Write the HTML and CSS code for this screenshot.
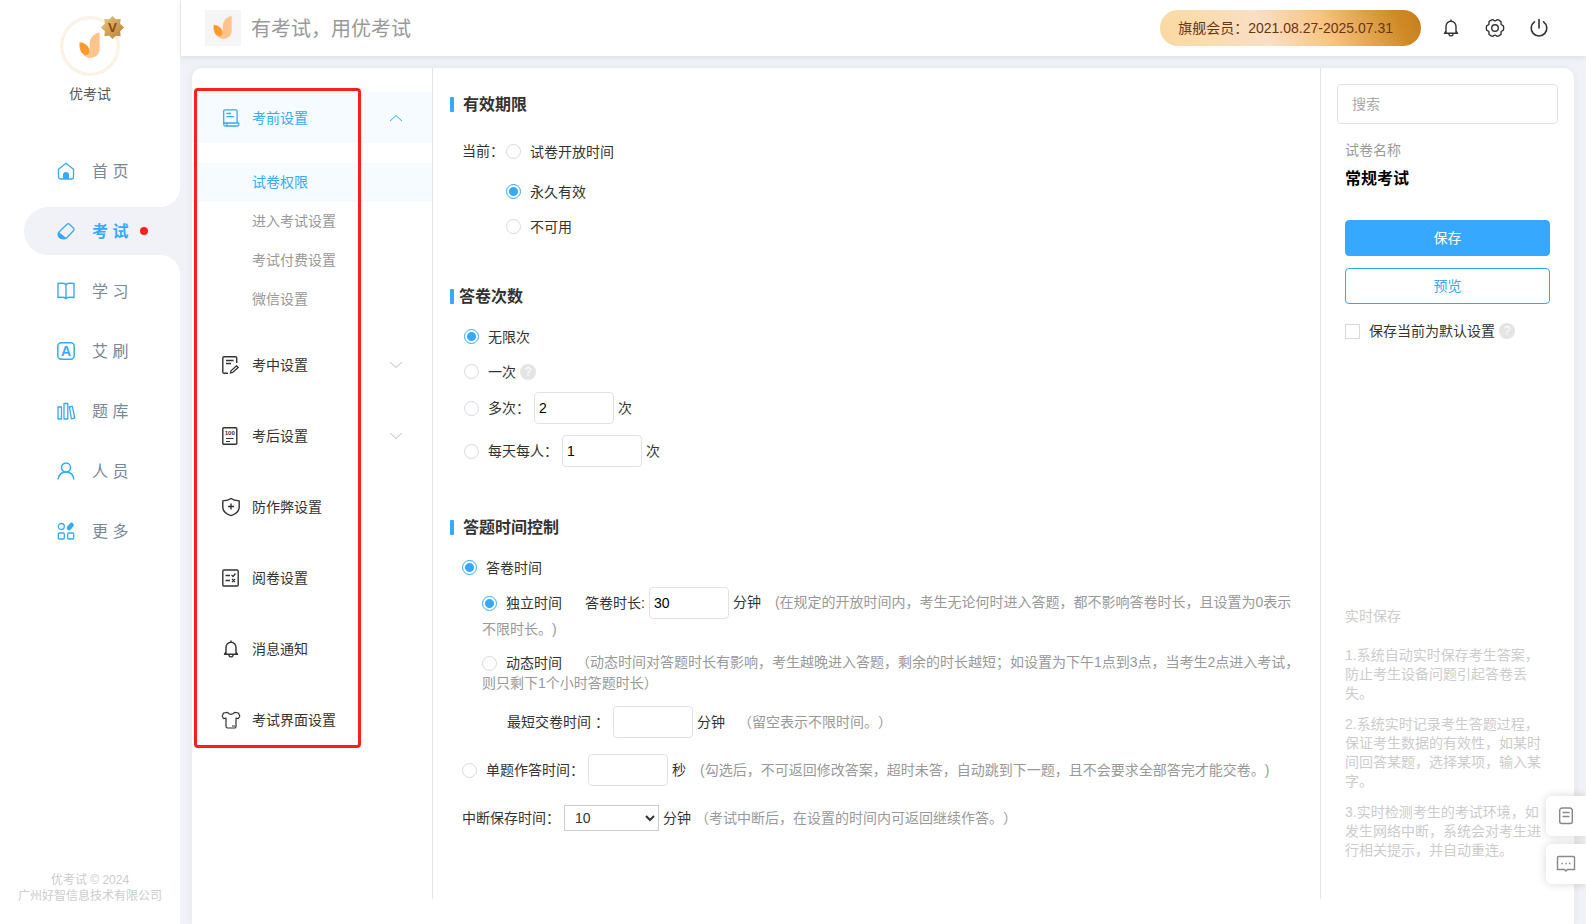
FILE: index.html
```html
<!DOCTYPE html>
<html lang="zh-CN">
<head>
<meta charset="utf-8">
<meta name="viewport" content="width=device-width, initial-scale=1">
<title>优考试</title>
<link rel="stylesheet" href="styles.css">
</head>
<body>
<svg class="defs" aria-hidden="true">
  <symbol id="logo" viewBox="0 0 108 108">
    <path d="M80 17C62 22 53 34 53 48V68C50 76 44 78 36 77C42 84 48 87 56 86C70 85 80 76 80 62Z" fill="#ffc48c"/>
    <path d="M26 44C40 44 53 56 53 68C52 76 46 80 40 78C29 75 24 60 26 44Z" fill="#ff9a2e"/>
  </symbol>
  <symbol id="bell" viewBox="0 0 18 18">
    <path d="M9 1v1.200M2.500 14.300h13M4 13.800V7.500a5 5.300 0 0 1 10 0V13.800M2.500 14.300L4 12M15.500 14.300L14 12M7 15.500c.5 1.800 3.500 1.800 4 0" fill="none" stroke="currentColor" stroke-width="1.400" stroke-linecap="round"/>
  </symbol>
</svg>
<div class="app">
  <aside class="sidebar">
    <div class="profile">
      <div class="avatar">
        <svg class="avatar-logo"><use href="#logo"/></svg>
        <svg class="badge" viewBox="0 0 24 24"><defs><linearGradient id="gold" x1="0" y1="0" x2="1" y2="1"><stop offset="0" stop-color="#e9c88a"/><stop offset="1" stop-color="#b97d2c"/></linearGradient></defs><path d="M12 0l3.500 3.500 5-.500-.500 5L24 12l-4 4 .500 5-5-.500L12 24l-3.500-3.500-5 .500.500-5L0 12l4-4-.500-5 5 .500z" fill="url(#gold)"/><text x="12" y="17" text-anchor="middle" class="badge-letter">V</text></svg>
      </div>
      <div class="profile-name">优考试</div>
    </div>
    <nav class="menu">
      <a class="menu-item" href="#"><svg class="icon" viewBox="0 0 18 18"><path d="M1.500 7.200L9 1.200l7.500 6V15a2 2 0 0 1-2 2h-11a2 2 0 0 1-2-2z" fill="none" stroke="currentColor" stroke-width="1.300" stroke-linejoin="round"/><path d="M6 17v-4a3 3 0 0 1 6 0v4z" fill="currentColor"/></svg><span>首 页</span></a>
      <a class="menu-item active" href="#"><svg class="icon" viewBox="0 0 18 18"><path d="M10 2.200c.800-.800 1.700-.800 2.500 0l4 4c.800.800.800 1.700 0 2.500l-7 7.300c-.800.800-5 1.500-7-.500s-1.500-4.500-.700-5.300z" fill="none" stroke="currentColor" stroke-width="1.300"/><path d="M1.800 10l7.500 6c-1.500 1.300-5 1.300-6.800-.500S.800 11.500 1.800 10z" fill="currentColor"/></svg><span>考 试</span><i class="dot"></i></a>
      <a class="menu-item" href="#"><svg class="icon" viewBox="0 0 18 18"><path d="M9 2.500C7.500 1 5 1 1 1.500v14c4-.500 6.500-.500 8 1 1.500-1.500 4-1.500 8-1v-14C13 1 10.500 1 9 2.500zM9 2.500v14" fill="none" stroke="currentColor" stroke-width="1.400"/></svg><span>学 习</span></a>
      <a class="menu-item" href="#"><svg class="icon" viewBox="0 0 18 18"><rect x=".800" y=".800" width="16.400" height="16.400" rx="3.500" fill="none" stroke="currentColor" stroke-width="1.500"/><text x="9" y="14" text-anchor="middle" class="icon-letter">A</text></svg><span>艾 刷</span></a>
      <a class="menu-item" href="#"><svg class="icon" viewBox="0 0 18 18"><path d="M1 5h3.500v12H1zM7 1.500h3.800V17H7zM12.300 5l3-.700L17.800 16l-3.300.800z" fill="none" stroke="currentColor" stroke-width="1.300" stroke-linejoin="round"/></svg><span>题 库</span></a>
      <a class="menu-item" href="#"><svg class="icon" viewBox="0 0 18 18"><circle cx="9" cy="5.500" r="4.500" fill="none" stroke="currentColor" stroke-width="1.500"/><path d="M1.200 17.500c.500-5 3.500-7.500 7.800-7.500s7.300 2.500 7.800 7.500" fill="none" stroke="currentColor" stroke-width="1.500"/></svg><span>人 员</span></a>
      <a class="menu-item" href="#"><svg class="icon" viewBox="0 0 18 18"><g fill="none" stroke="currentColor" stroke-width="1.300"><circle cx="4.300" cy="4.500" r="3"/><rect x="1.300" y="11" width="6" height="6" rx="1"/><rect x="10.700" y="11" width="6" height="6" rx="1"/></g><path d="M12 6l2.500-3" stroke="currentColor" stroke-width="4.500" stroke-linecap="round"/></svg><span>更 多</span></a>
    </nav>
    <footer class="copyright">优考试 © 2024<br>广州好智信息技术有限公司</footer>
  </aside>

  <div class="content">
    <header class="topbar">
      <div class="brand"><svg class="brand-logo"><use href="#logo"/></svg><span>有考试，用优考试</span></div>
      <div class="tools">
        <span class="member">旗舰会员：2021.08.27-2025.07.31</span>
        <button class="tool" aria-label="通知"><svg class="icon"><use href="#bell"/></svg></button>
        <button class="tool" aria-label="设置"><svg class="icon" viewBox="0 0 18 18"><g fill="none" stroke="currentColor" stroke-width="1.400" stroke-linejoin="round"><path d="M17.400 6.900Q18 9 17.400 11.100L15.100 12.500 15 15.300Q13.500 16.900 11.400 17.400L9 16 6.600 17.400Q4.500 16.900 3 15.300L2.900 12.500.600 11.100Q0 9 .600 6.900L2.900 5.500 3 2.700Q4.500 1.100 6.600.600L9 2 11.400.600Q13.500 1.100 15 2.700L15.100 5.500Z"/><circle cx="9" cy="9" r="3.300"/></g></svg></button>
        <button class="tool" aria-label="退出"><svg class="icon" viewBox="0 0 18 18"><path d="M4.500 2.800a7.800 7.800 0 1 0 9 0M9 .500V9" fill="none" stroke="currentColor" stroke-width="1.600" stroke-linecap="round"/></svg></button>
      </div>
    </header>

    <main class="card">
      <nav class="settings">
        <a class="group open" href="#"><svg class="icon" viewBox="0 0 18 18"><path d="M1.700 15V2a1.200 1.200 0 0 1 1.200-1.200h11A1.200 1.200 0 0 1 15.100 2v12M3.500 14h13c.800 1 .300 3-1 3H3.500c-2.400 0-2.400-3 0-3M5 14.200v2.600M5 4.500h3.500M5 7.700h6.500" fill="none" stroke="currentColor" stroke-width="1.300" stroke-linecap="round"/></svg><span>考前设置</span><svg class="chevron" viewBox="0 0 12 6"><path d="M0 6l6-5.500L12 6" fill="none" stroke="currentColor"/></svg></a>
        <div class="subs">
          <a class="sub current" href="#">试卷权限</a>
          <a class="sub" href="#">进入考试设置</a>
          <a class="sub" href="#">考试付费设置</a>
          <a class="sub" href="#">微信设置</a>
        </div>
        <a class="group" href="#"><svg class="icon" viewBox="0 0 18 18"><path d="M6 17.200H2a1.200 1.200 0 0 1-1.200-1.200V2A1.200 1.200 0 0 1 2 .800h11.500A1.200 1.200 0 0 1 14.700 2v5M4 4.500h7.500M4 7.500h5" fill="none" stroke="currentColor" stroke-width="1.400"/><path d="M8.500 17l.500-2.200 5.500-5 1.700 1.700-5.500 5z" fill="none" stroke="currentColor" stroke-width="1.300"/></svg><span>考中设置</span><svg class="chevron" viewBox="0 0 12 6"><path d="M0 0l6 5.500L12 0" fill="none" stroke="currentColor"/></svg></a>
        <a class="group" href="#"><svg class="icon" viewBox="0 0 18 18"><rect x=".800" y=".800" width="14" height="16.400" rx="1" fill="none" stroke="currentColor" stroke-width="1.400"/><text x="7.800" y="8" text-anchor="middle" class="icon-score">100</text><path d="M4 11.500h7.500M4 14.500h4" stroke="currentColor" stroke-width="1.200"/></svg><span>考后设置</span><svg class="chevron" viewBox="0 0 12 6"><path d="M0 0l6 5.500L12 0" fill="none" stroke="currentColor"/></svg></a>
        <a class="group" href="#"><svg class="icon" viewBox="0 0 18 18"><path d="M9 .500C7 2 4 2.700.800 2.900V9c0 4 3.200 7 8.200 8.600 5-1.600 8.200-4.600 8.200-8.600V2.900C14 2.700 11 2 9 .500zM9 5.500v6M6 8.500h6" fill="none" stroke="currentColor" stroke-width="1.400" stroke-linejoin="round"/></svg><span>防作弊设置</span></a>
        <a class="group" href="#"><svg class="icon" viewBox="0 0 18 18"><rect x=".800" y="1" width="15.400" height="16" rx="1.200" fill="none" stroke="currentColor" stroke-width="1.400"/><path d="M3.500 6.500H8M3.500 11.500H8M9.500 6l1.500 1.500 2.500-3M10 10l3 3M13 10l-3 3" fill="none" stroke="currentColor" stroke-width="1.300"/></svg><span>阅卷设置</span></a>
        <a class="group" href="#"><svg class="icon"><use href="#bell"/></svg><span>消息通知</span></a>
        <a class="group" href="#"><svg class="icon" viewBox="0 0 18 18"><path d="M5.500 1.300L1.500 2 .200 5.300l1.500 2.400 2.300-.500v8.300a1.500 1.500 0 0 0 1.500 1.500h7a1.500 1.500 0 0 0 1.500-1.500V7.200l2.300.5 1.500-2.400L16.500 2l-4-.700C11 4 7 4 5.500 1.300zM10 15h3" fill="none" stroke="currentColor" stroke-width="1.200" stroke-linejoin="round"/></svg><span>考试界面设置</span></a>
        <div class="highlight"></div>
      </nav>

      <form class="form">
        <section class="section">
          <h2 class="title">有效期限</h2>
          <div class="period">
            <span class="period-label">当前：</span>
            <div class="period-options">
              <label class="option first"><input type="radio" name="period">试卷开放时间</label>
              <label class="option"><input type="radio" name="period" checked>永久有效</label>
              <label class="option"><input type="radio" name="period">不可用</label>
            </div>
          </div>
        </section>

        <section class="section">
          <h2 class="title near">答卷次数</h2>
          <div class="times">
            <label class="option"><input type="radio" name="times" checked>无限次</label>
            <div class="option"><label class="choice"><input type="radio" name="times">一次</label><span class="help">?</span></div>
            <div class="field-row"><label class="choice"><input type="radio" name="times">多次：</label><input class="box" type="text" value="2" aria-label="多次"><span>次</span></div>
            <div class="field-row"><label class="choice"><input type="radio" name="times">每天每人：</label><input class="box" type="text" value="1" aria-label="每天每人"><span>次</span></div>
          </div>
        </section>

        <section class="section">
          <h2 class="title">答题时间控制</h2>
          <div class="timing">
            <label class="option"><input type="radio" name="mode" checked>答卷时间</label>
            <div class="nested">
              <div class="prose"><label class="choice"><input type="radio" name="kind" checked>独立时间</label><label class="lead" for="duration">答卷时长:</label><input class="box" id="duration" type="text" value="30"><span class="unit">分钟</span><span class="hint">(在规定的开放时间内，考生无论何时进入答题，都不影响答卷时长，且设置为0表示不限时长。)</span></div>
              <div class="prose dynamic"><label class="choice"><input type="radio" name="kind">动态时间</label><span class="hint">（动态时间对答题时长有影响，考生越晚进入答题，剩余的时长越短；如设置为下午1点到3点，当考生2点进入考试，则只剩下1个小时答题时长）</span></div>
              <div class="field-row shortest"><label for="shortest">最短交卷时间 ：</label><input class="box" id="shortest" type="text"><span>分钟</span><span class="hint">（留空表示不限时间。）</span></div>
            </div>
            <div class="field-row single"><label class="choice"><input type="radio" name="mode">单题作答时间：</label><input class="box" type="text" aria-label="单题作答时间"><span>秒</span><span class="hint">(勾选后，不可返回修改答案，超时未答，自动跳到下一题，且不会要求全部答完才能交卷。)</span></div>
            <div class="field-row interrupt"><label for="interrupt">中断保存时间：</label><select class="select" id="interrupt"><option>10</option></select><span>分钟</span><span class="hint">（考试中断后，在设置的时间内可返回继续作答。）</span></div>
          </div>
        </section>
      </form>

      <aside class="side">
        <input class="search" type="text" placeholder="搜索" aria-label="搜索">
        <div class="side-body">
          <div class="paper-label">试卷名称</div>
          <div class="paper-name">常规考试</div>
          <button class="btn primary" type="button">保存</button>
          <button class="btn" type="button">预览</button>
          <div class="default-row"><label class="default"><input type="checkbox">保存当前为默认设置</label><span class="help">?</span></div>
          <div class="notes">
            <h3 class="notes-title">实时保存</h3>
            <p>1.系统自动实时保存考生答案，防止考生设备问题引起答卷丢失。</p>
            <p>2.系统实时记录考生答题过程，保证考生数据的有效性，如某时间回答某题，选择某项，输入某字。</p>
            <p>3.实时检测考生的考试环境，如发生网络中断，系统会对考生进行相关提示，并自动重连。</p>
          </div>
        </div>
      </aside>
    </main>
  </div>
  <div class="floats">
    <button class="float" aria-label="文档"><svg class="icon" viewBox="0 0 18 18"><path d="M2.700 3.500A2.500 2.500 0 0 1 5.200 1h7.600a2.500 2.500 0 0 1 2.500 2.500v11a2 2 0 0 1-2 2H4.700a2 2 0 0 1-2-2zM5.500 5.500h7M5.500 9.500h7" fill="none" stroke="currentColor" stroke-width="1.400"/></svg></button>
    <button class="float" aria-label="留言"><svg class="icon" viewBox="0 0 18 18"><path d="M1.500 1.500h15a1 1 0 0 1 1 1v12h-7L9 16l-1.500-1.500h-7v-12a1 1 0 0 1 1-1z" fill="none" stroke="currentColor" stroke-width="1.400"/><path d="M4.500 8.500h1.500M8.300 8.500h1.500M12 8.500h1.500" stroke="currentColor" stroke-width="1.500"/></svg></button>
  </div>
</div>
</body>
</html>
```

FILE: styles.css
```css
* { box-sizing: border-box; }
body {
  margin: 0;
  background: #f1f2f7;
  color: #333;
  font: 14px/20px "Liberation Sans", "Noto Sans CJK SC", sans-serif;
  text-spacing-trim: space-all;
}
a { color: inherit; text-decoration: none; }
button, input, select { font: inherit; }
button { cursor: pointer; }
.defs { position: absolute; width: 0; height: 0; }
.icon { width: 18px; height: 18px; flex: none; overflow: visible; }
.app { display: flex; min-height: 100vh; }

/* Sidebar */
.sidebar { width: 180px; flex: none; display: flex; flex-direction: column; background: #fff; }
.profile { display: flex; flex-direction: column; align-items: center; gap: 8px; padding-top: 16px; }
.profile-name { color: #555; }
.avatar { position: relative; width: 60px; height: 60px; border: 2px solid #faf3e6; border-radius: 50%; box-shadow: inset 0 0 0 1px #f8ecd9; display: flex; align-items: center; justify-content: center; }
.avatar-logo { width: 40px; height: 40px; }
.badge { position: absolute; top: -2px; right: -6px; width: 23px; height: 23px; }
.badge-letter { font-size: 14px; font-weight: 700; fill: #8a4a10; }
.menu { display: flex; flex-direction: column; gap: 12px; margin-top: 43px; padding-left: 24px; }
.menu-item { position: relative; display: flex; align-items: center; gap: 17px; height: 48px; padding-left: 33px; border-radius: 24px 0 0 24px; font-size: 16px; line-height: 24px; color: #778899; }
.menu-item .icon { color: #36a9ff; }
.menu-item span { padding-top: 1px; }
.active { background: #f1f2f7; color: #36a9ff; font-weight: 700; }
.active::before, .active::after { content: ""; position: absolute; right: 0; width: 20px; height: 20px; }
.active::before { bottom: 100%; background: radial-gradient(circle at 0 0, transparent 20px, #f1f2f7 20px); }
.active::after { top: 100%; background: radial-gradient(circle at 0 100%, transparent 20px, #f1f2f7 20px); }
.dot { width: 8px; height: 8px; margin-left: -5px; border-radius: 50%; background: #ff1f1f; }
.icon-letter { font-size: 14px; font-weight: 700; fill: currentColor; }
.icon-score { font-size: 6px; font-weight: 700; fill: currentColor; }
.copyright { margin-top: auto; padding-bottom: 20px; text-align: center; font-size: 12px; line-height: 16px; color: #ccc; }

/* Top bar */
.content { flex: 1; min-width: 0; display: flex; flex-direction: column; gap: 12px; }
.topbar { display: flex; align-items: center; justify-content: space-between; height: 56px; margin-left: 1px; padding: 0 38px 0 24px; background: #fff; box-shadow: 0 1px 6px rgba(0, 0, 40, .1); }
.brand { display: flex; align-items: center; gap: 10px; font-size: 20px; line-height: 28px; color: #999; }
.brand span { padding-top: 2px; }
.brand-logo { width: 36px; height: 36px; background: #f5f5f5; }
.tools { display: flex; align-items: center; gap: 26px; }
.member { padding: 8px 28px 8px 18px; margin-right: -5px; border-radius: 18px; background: linear-gradient(65deg, #fad9a0 0%, #fadcae 18%, #f9dfc5 40%, #f8c581 62%, #cf8a26 90%, #c47d18 100%); color: #6b3410; }
.tool { display: flex; padding: 0; border: 0; background: none; color: #333; }

/* Card */
.card { flex: 1; display: flex; margin: 0 12px; padding-bottom: 25px; background: #fff; border-radius: 10px 10px 0 0; box-shadow: 0 0 8px rgba(0, 0, 40, .06); }
.settings { position: relative; width: 241px; flex: none; display: flex; flex-direction: column; gap: 20px; padding-top: 24px; border-right: 1px solid #e4e4e4; }
.group { display: flex; align-items: center; gap: 12px; height: 51px; padding: 0 30px; }
.chevron { width: 12px; height: 6px; margin-left: auto; color: #bbb; overflow: visible; }
.open { background: #f5fbff; color: #36a9ff; }
.open .chevron { color: #36a9ff; }
.sub { display: block; padding-left: 60px; line-height: 39px; color: #999; }
.current { background: #f5fbff; color: #36a9ff; }
.highlight { position: absolute; top: 20px; left: 2px; width: 167px; height: 660px; border: 3px solid #ff1f1a; border-radius: 4px; pointer-events: none; }

/* Form */
.form { flex: 1; min-width: 0; padding: 25px 18px 0 17px; }
.title { display: flex; align-items: center; gap: 9px; margin: 0; font-size: 16px; line-height: 24px; }
.title::before { content: ""; width: 4px; height: 15px; margin-bottom: 2px; border-radius: 1px; background: #36a9ff; }
.near { gap: 5px; }
input[type="radio"] { appearance: none; flex: none; width: 15px; height: 15px; margin: 0; border: 1px solid #d5dae0; border-radius: 50%; background: #fff; }
input[type="radio"]:checked { border-color: #36a9ff; background: radial-gradient(circle, #36a9ff 4px, #fff 5px); }
.option { display: flex; align-items: center; gap: 9px; height: 35px; }
.choice { display: inline-flex; align-items: center; gap: 9px; }
.period { display: flex; margin: 17px 0 41px 12px; }
.period-label { line-height: 34px; }
.period-options { padding-left: 2px; }
.first { margin-bottom: 5px; }
.times { display: flex; flex-direction: column; margin: 10px 0 49px 14px; }
.times div.option { gap: 4px; }
.help { width: 16px; height: 16px; border-radius: 50%; background: #e4e4e4; color: #fff; font-size: 12px; line-height: 16px; text-align: center; }
.box { width: 80px; height: 32px; padding: 0 4px; border: 1px solid #e2e2e2; border-radius: 4px; background: #fff; color: #000; }
.field-row { display: flex; align-items: center; gap: 4px; min-height: 32px; }
.times .field-row { margin-top: 3px; }
.times .field-row + .field-row { margin-top: 11px; }
.hint { color: #999; }
.timing { display: flex; flex-direction: column; margin: 10px 0 0 12px; }
.nested { display: flex; flex-direction: column; margin-top: 2px; padding-left: 20px; }
.prose > label, .prose > .box { vertical-align: middle; }
.lead { margin: 0 4px 0 23px; }
.unit { margin: 0 14px 0 4px; }
.dynamic { margin-top: 13px; }
.dynamic .hint { margin-left: 14px; }
.shortest { margin-top: 13px; padding-left: 25px; }
.shortest .hint { margin-left: 9px; }
.single { margin-top: 16px; }
.single .hint { margin-left: 10px; }
.interrupt { margin-top: 16px; }
.select { width: 95px; height: 26px; padding: 0 0 0 6px; border: 1px solid #ccc; border-radius: 0; background: #fff; color: #333; }

/* Right column */
.side { width: 254px; flex: none; display: flex; flex-direction: column; padding: 16px 16px 0; border-left: 1px solid #e4e4e4; }
.search { width: 100%; height: 40px; padding: 0 14px; border: 1px solid #e2e2e2; border-radius: 4px; background: #fff; }
.search::placeholder { color: #aaa; }
.side-body { flex: 1; display: flex; flex-direction: column; padding: 16px 8px 0; }
.paper-label { color: #999; }
.paper-name { margin: 7px 0 29px; font-size: 16px; line-height: 24px; font-weight: 700; color: #000; }
.btn { height: 36px; margin-bottom: 12px; border: 1px solid #36a9ff; border-radius: 4px; background: #fff; color: #36a9ff; }
.primary { background: #36a9ff; color: #fff; }
.default-row { display: flex; align-items: center; gap: 4px; margin-top: 5px; white-space: nowrap; }
.default { display: flex; align-items: center; gap: 9px; }
.default input { appearance: none; width: 15px; height: 15px; margin: 0; border: 1px solid #d5dae0; background: #fff; }
.notes { margin-top: auto; padding-bottom: 27px; line-height: 19px; color: #ccc; }
.notes-title { margin: 0 0 20px; font-size: 14px; font-weight: 400; }
.notes p { margin: 0 0 12px; }

/* Floating buttons */
.floats { position: fixed; right: 0; bottom: 40px; display: flex; flex-direction: column; gap: 8px; }
.float { display: flex; align-items: center; justify-content: center; width: 40px; height: 40px; padding: 0; border: 0; border-radius: 6px 0 0 6px; background: #fff; color: #888; box-shadow: 0 0 10px rgba(0, 0, 0, .16); }
```
